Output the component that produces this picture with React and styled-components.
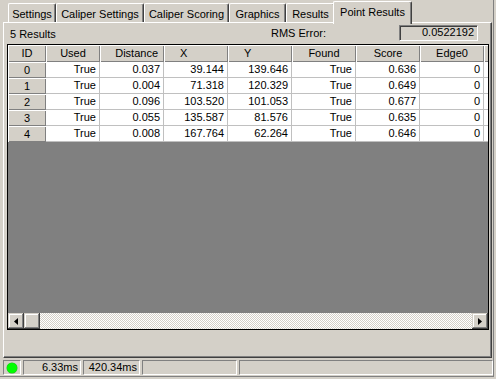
import React from 'react';
import styled, { createGlobalStyle } from 'styled-components';

const GlobalStyle = createGlobalStyle`
  html, body {
    margin: 0;
    padding: 0;
    background: #d4d0c8;
  }
  body {
    font-family: "Liberation Sans", Arial, sans-serif;
    font-size: 11px;
    color: #000;
  }
  * { box-sizing: border-box; }
`;

const Window = styled.div`
  width: 496px;
  height: 379px;
  overflow: hidden;
  background: #d4d0c8;
`;

const Frame = styled.div`
  width: 494px;
  height: 377px;
  padding-left: 3px;
  border-right: 1px solid #808080;
  border-bottom: 1px solid #808080;
  display: flex;
  flex-direction: column;
`;

const TabStrip = styled.div`
  height: 22px;
  display: flex;
  align-items: flex-end;
  padding-left: 5px;
  position: relative;
  z-index: 2;
`;

const Tab = styled.div`
  width: ${p => p.$w}px;
  height: ${p => (p.$active ? 23 : 19)}px;
  margin: ${p => (p.$active ? '0 -2px -2px -2px' : '0')};
  padding-top: 4px;
  background: #d4d0c8;
  border-top: 1px solid #fff;
  border-left: 1px solid #fff;
  border-right: 1px solid #404040;
  border-radius: 2px 2px 0 0;
  box-shadow: inset -1px 0 0 #808080;
  line-height: 13px;
  text-align: center;
  white-space: nowrap;
  position: relative;
  z-index: ${p => (p.$active ? 2 : 1)};
`;

const Panel = styled.div`
  width: 489px;
  height: 336px;
  border-top: 1px solid #fff;
  border-left: 1px solid #fff;
  border-right: 1px solid #404040;
  border-bottom: 1px solid #404040;
  box-shadow: inset -1px -1px 0 #808080;
  display: flex;
  flex-direction: column;
`;

const InfoRow = styled.div`
  height: 21px;
  display: grid;
  grid-template-columns: 261px 128px 79px;
  align-items: start;
  padding-left: 6px;
`;

const Caption = styled.div`
  margin-top: ${p => p.$top}px;
  line-height: ${p => p.$lh}px;
  white-space: nowrap;
`;

const ValueBox = styled.div`
  margin-top: 2px;
  height: 16px;
  line-height: 13px;
  text-align: right;
  padding-right: 3px;
  border: 1px solid;
  border-color: #808080 #fff #fff #808080;
  box-shadow: inset 1px 1px 0 #404040;
  background: #d4d0c8;
`;

const Grid = styled.div`
  margin-left: 3px;
  width: 482px;
  height: 286px;
  border: 1px solid #000;
  background: #808080;
  display: flex;
  flex-direction: column;
  overflow: hidden;
`;

const Table = styled.div`
  display: grid;
  grid-template-columns: 38px 54px repeat(7, 64px);
  grid-template-rows: 17px;
  grid-auto-rows: 16px;
  width: max-content;
`;

const HeadCell = styled.div`
  background: #d4d0c8;
  box-shadow: inset 1px 1px 0 #fff, inset -1px -1px 0 #808080;
  display: flex;
  align-items: center;
  justify-content: ${p => p.$align || 'center'};
  padding: ${p => p.$pad || '0'};
  line-height: 13px;
  white-space: nowrap;
`;

const DataCell = styled.div`
  background: #fff;
  border-right: 1px solid #c0c0c0;
  border-bottom: 1px solid #c0c0c0;
  text-align: right;
  padding-right: 3px;
  line-height: 15px;
`;

const Filler = styled.div`
  flex: 1;
`;

const ScrollBar = styled.div`
  height: 16px;
  display: flex;
  background: repeating-conic-gradient(#d4d0c8 0 25%, #fff 0 50%) 0 0 / 2px 2px;
`;

const ScrollPart = styled.div`
  width: 16px;
  height: 16px;
  background: #d4d0c8;
  box-shadow: inset -1px -1px 0 #404040, inset 1px 1px 0 #d4d0c8,
    inset -2px -2px 0 #808080, inset 2px 2px 0 #fff;
  display: flex;
  align-items: center;
  justify-content: center;
`;

const Track = styled.div`
  flex: 1;
`;

const StatusBar = styled.div`
  margin-top: 2px;
  height: 15px;
  display: flex;
  gap: 2px;
`;

const StatusPanel = styled.div`
  width: ${p => p.$w}px;
  height: 15px;
  border: 1px solid;
  border-color: #808080 #fff #fff #808080;
  display: flex;
  align-items: center;
  justify-content: ${p => (p.$center ? 'center' : 'flex-end')};
  padding-right: ${p => (p.$center ? 0 : 2)}px;
  line-height: 13px;
`;

const Led = styled.div`
  width: 10px;
  height: 10px;
  border-radius: 50%;
  background: #00ff00;
  box-shadow: 0 0 0 0.5px #20c020;
`;

const tabs = [
  { label: 'Settings', w: 48 },
  { label: 'Caliper Settings', w: 88 },
  { label: 'Caliper Scoring', w: 85 },
  { label: 'Graphics', w: 57 },
  { label: 'Results', w: 49 },
  { label: 'Point Results', w: 79, active: true },
];

// last column is only a sliver at the right edge, so it has no caption
const columns = [
  { label: 'ID' },
  { label: 'Used' },
  { label: 'Distance', align: 'flex-end', pad: '0 6px 0 0' },
  { label: 'X', align: 'flex-start', pad: '0 0 0 16px' },
  { label: 'Y', align: 'flex-start', pad: '0 0 0 16px' },
  { label: 'Found' },
  { label: 'Score' },
  { label: 'Edge0' },
  { label: '' },
];

const rows = [
  ['True', '0.037', '39.144', '139.646', 'True', '0.636', '0', ''],
  ['True', '0.004', '71.318', '120.329', 'True', '0.649', '0', ''],
  ['True', '0.096', '103.520', '101.053', 'True', '0.677', '0', ''],
  ['True', '0.055', '135.587', '81.576', 'True', '0.635', '0', ''],
  ['True', '0.008', '167.764', '62.264', 'True', '0.646', '0', ''],
];

const Arrow = ({ dir }) => (
  <svg width="4" height="7" viewBox="0 0 4 7">
    {dir === 'left'
      ? <polygon points="4,0 4,7 0,3.5" fill="#000" />
      : <polygon points="0,0 0,7 4,3.5" fill="#000" />}
  </svg>
);

export default function App() {
  return (
    <Window>
      <GlobalStyle />
      <Frame>
        <TabStrip>
          {tabs.map(t => (
            <Tab key={t.label} $w={t.w} $active={t.active}>{t.label}</Tab>
          ))}
        </TabStrip>
        <Panel>
          <InfoRow>
            <Caption $top={4} $lh={14}>5 Results</Caption>
            <Caption $top={2} $lh={16}>RMS Error:</Caption>
            <ValueBox>0.0522192</ValueBox>
          </InfoRow>
          <Grid>
            <Table>
              {columns.map((c, i) => (
                <HeadCell key={i} $align={c.align} $pad={c.pad}>{c.label}</HeadCell>
              ))}
              {rows.map((r, i) => (
                <React.Fragment key={i}>
                  <HeadCell>{i}</HeadCell>
                  {r.map((v, j) => <DataCell key={j}>{v}</DataCell>)}
                </React.Fragment>
              ))}
            </Table>
            <Filler />
            <ScrollBar>
              <ScrollPart><Arrow dir="left" /></ScrollPart>
              <ScrollPart />
              <Track />
              <ScrollPart><Arrow dir="right" /></ScrollPart>
            </ScrollBar>
          </Grid>
        </Panel>
        <StatusBar>
          <StatusPanel $w={18} $center><Led /></StatusPanel>
          <StatusPanel $w={58}>6.33ms</StatusPanel>
          <StatusPanel $w={57}>420.34ms</StatusPanel>
          <StatusPanel $w={95} />
          <StatusPanel $w={254} />
        </StatusBar>
      </Frame>
    </Window>
  );
}
